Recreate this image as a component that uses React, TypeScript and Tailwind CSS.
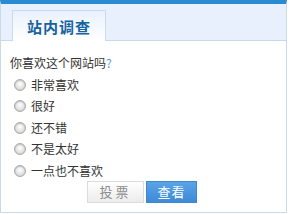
import React from "react";

const options = ["非常喜欢", "很好", "还不错", "不是太好", "一点也不喜欢"];

function Radio() {
  return (
    <span className="inline-block w-[12px] h-[12px] rounded-full border border-[#a9a9a9] bg-[radial-gradient(circle_at_50%_40%,#ffffff_0%,#e8e8e8_45%,#c4c4c4_100%)] shadow-[inset_0_1px_1px_rgba(0,0,0,0.15)] shrink-0" />
  );
}

export default function App() {
  return (
    <div
      className="w-[287px] h-[213px] border border-[#c9d9e7] border-t-[4px] border-t-[#2a8ad2] bg-white text-[#333] text-[12px]"
      style={{ fontFamily: '"Noto Sans CJK SC", "Noto Sans", sans-serif' }}
    >
      <div className="h-[37px] bg-[#e9f0fd] border-b border-[#c9d9e7] flex items-end pl-[11px]">
        <div className="w-[94px] h-[31px] -mb-px border border-b-0 border-[#c9dcec] bg-gradient-to-b from-[#eaf1fd] to-white flex items-center justify-center">
          <span className="text-[15px] font-bold text-[#15639f] tracking-[1px] leading-none">站内调查</span>
        </div>
      </div>
      <div className="pl-[9px] pt-[11px]">
        <div className="h-[21px] leading-[21px]">
          你喜欢这个网站吗<span className="text-[#5b9bd5]">?</span>
        </div>
        <div className="mt-[1px] pl-[4px]">
          {options.map((o) => (
            <div key={o} className="h-[21.5px] flex items-center gap-[5px]">
              <Radio />
              <span className="leading-none">{o}</span>
            </div>
          ))}
        </div>
        <div className="flex gap-[2px] pl-[77px] mt-[-1px]">
          <button className="w-[57px] h-[22px] border border-[#dcdcdc] bg-gradient-to-b from-white to-[#ececec] text-[#8c8c8c] text-[13px] tracking-[3px] leading-none flex items-center justify-center">
            投票
          </button>
          <button className="w-[51px] h-[22px] border border-[#3e88d0] bg-gradient-to-b from-[#5aa3e6] to-[#3d8ad6] text-white text-[13px] tracking-[1px] leading-none flex items-center justify-center">
            查看
          </button>
        </div>
      </div>
    </div>
  );
}
